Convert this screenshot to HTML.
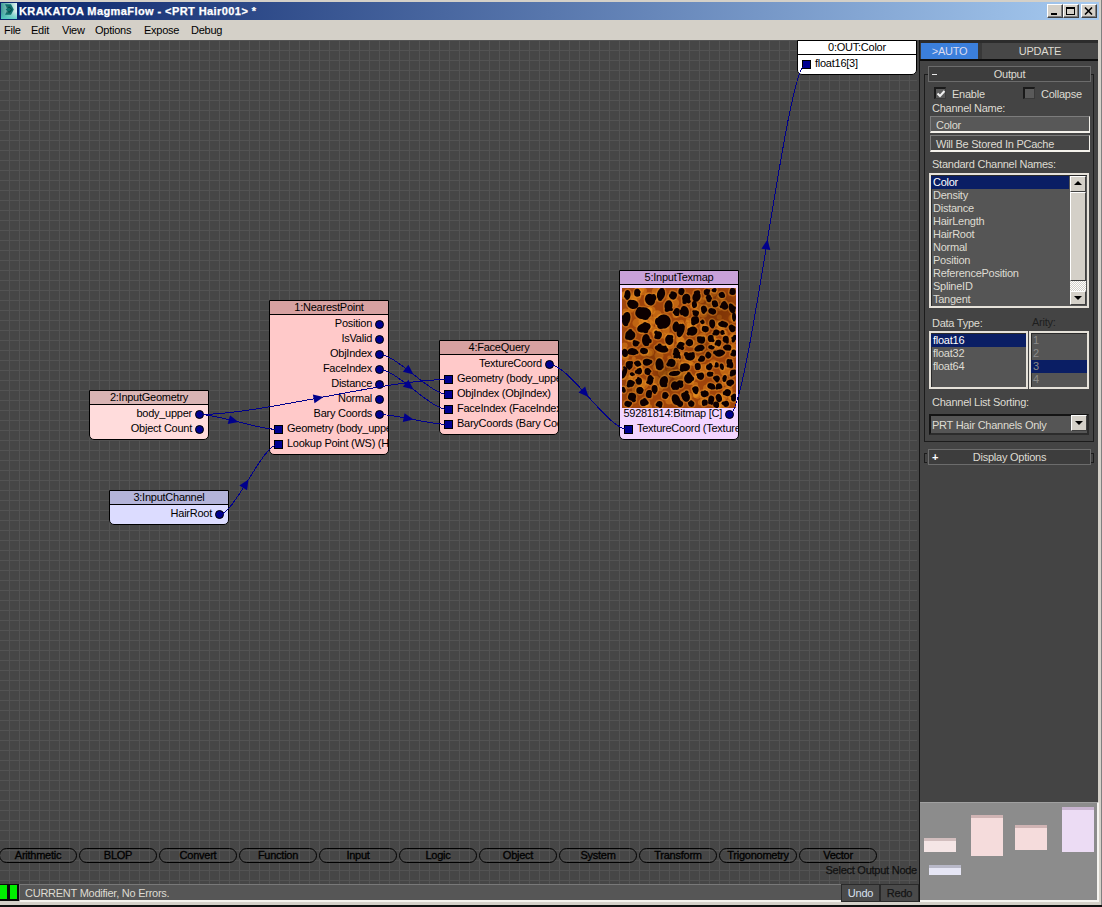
<!DOCTYPE html>
<html><head><meta charset="utf-8"><style>
*{margin:0;padding:0;box-sizing:border-box}
html,body{width:1102px;height:907px;overflow:hidden;background:#d4d0c8;font-family:"Liberation Sans", sans-serif;font-size:11px;letter-spacing:-0.25px}
.abs{position:absolute}
#title{position:absolute;left:0;top:2px;width:1099px;height:18px;background:linear-gradient(to right,#0a246a,#a6caf0)}
#title .t{position:absolute;left:19px;top:3px;color:#fff;font-weight:bold;font-size:11px;line-height:12px;white-space:nowrap;letter-spacing:0.42px;-webkit-text-stroke:0.25px #fff}
.wb{position:absolute;top:2px;width:16px;height:14px;background:#d4d0c8;border-top:1px solid #fff;border-left:1px solid #fff;border-right:1px solid #404040;border-bottom:1px solid #404040;box-shadow:inset -1px -1px 0 #808080}
#menu{position:absolute;left:0;top:20px;width:1099px;height:20px;background:#d4d0c8}
#menu span{position:absolute;top:4px;margin-left:-1px;color:#000;font-size:11px;line-height:12px}
#canvas{position:absolute;left:0;top:40px;width:919px;height:844px;background-color:#464646;
 background-image:linear-gradient(to right,#535353 1px,transparent 1px),linear-gradient(to bottom,#535353 1px,transparent 1px);
 background-size:10px 10px;background-position:9px 0px;overflow:hidden}
.node{position:absolute;border:1px solid #000;border-radius:0 0 5px 5px;overflow:hidden;color:#000}
.hdr{position:absolute;left:0;top:0;width:100%;height:14px;border-bottom:1px solid #000;text-align:center;line-height:13px;white-space:nowrap}
.row{position:absolute;height:15px;line-height:15px;white-space:nowrap}
.row.out{right:16px;text-align:right}
.row.in{left:17px}
.port{position:absolute;width:9px;height:9px;background:#000090;border:1px solid #000}
.port.c{border-radius:50%}
.img{position:absolute}
.wires{position:absolute;left:0;top:0}
.pill{position:absolute;top:808px;width:78px;height:15px;border:1px solid #000;border-radius:8px;text-align:center;line-height:13px;color:#000;-webkit-text-stroke:0.3px #000}
#selnode{position:absolute;right:2px;top:824px;color:#111;line-height:12px;-webkit-text-stroke:0.25px #111}
#panel{position:absolute;left:918px;top:40px;width:181px;height:762px;background:#444;border-left:1px solid #111}
.ptxt{position:absolute;color:#dedbd2;line-height:12px;white-space:nowrap}

#rpanel{position:absolute;left:919px;top:40px;width:179px;height:762px;background:#444;border-left:1px solid #151515}
.pt{position:absolute;color:#dedbd2;line-height:12px;white-space:nowrap;font-size:11px}
.bx{position:absolute}
.chk{position:absolute;width:12px;height:12px;background:#5a5a5a;border-top:2px solid #1a1a1a;border-left:2px solid #1a1a1a;border-right:1px solid #3a3a3a;border-bottom:1px solid #3a3a3a}
.lst{position:absolute;background:#555;border:2px solid #e6e2da;box-shadow:inset 1px 1px 0 #2a2a2a}
.lrow{position:absolute;left:0;height:13px;line-height:13px;padding-left:2px;color:#dedbd2;white-space:nowrap}
.sel{background:#0a1e64;color:#fff}
.sbtn{position:absolute;background:#d4d0c8;border-top:1px solid #fff;border-left:1px solid #fff;border-right:1px solid #404040;border-bottom:1px solid #404040}
.roll{position:absolute;border:1px solid #6c6c6c;background:#3d3d3d}
#status{position:absolute;left:19px;top:884px;width:822px;height:18px;background:#565656;border-top:1px solid #787878;border-left:1px solid #787878;border-bottom:2px solid #f4f2ec}
.gbox{position:absolute;top:884px;height:16px;background:#00f000;border:1px solid #000}
.ubtn{position:absolute;top:884px;height:18px;background:#4a4a4a;border:1px solid #2a2a2a;text-align:center;line-height:16px}
#mini{position:absolute;left:919px;top:802px;width:180px;height:100px;background:#8c8c8c;border-top:1px solid #a0a0a0;border-right:2px solid #f6f4f0;border-bottom:2px solid #f6f4f0}
.mn{position:absolute;border-top:3px solid}

</style></head><body>
<div id="title">
 <svg class="abs" style="left:1px;top:1px" width="16" height="16" viewBox="0 0 16 16"><defs><linearGradient id="ig" x1="0" y1="0" x2="1" y2="0"><stop offset="0" stop-color="#3f9e98"/><stop offset="1" stop-color="#dff4f0"/></linearGradient><linearGradient id="ig2" x1="0" y1="0" x2="0" y2="1"><stop offset="0.55" stop-color="#40c0b8" stop-opacity="0"/><stop offset="1" stop-color="#50d0c4" stop-opacity="0.85"/></linearGradient></defs><rect width="16" height="16" fill="url(#ig)"/><rect width="16" height="16" fill="url(#ig2)"/><path d="M4 1.3 L10 1.3 L12.8 6.6 L10 11.8 L4 11.8 L5.2 9.4 L7.6 9.4 L4.6 6.6 L7.6 3.8 L5.2 3.8 Z" fill="#0f706c"/><path d="M5.5 4.2 L8.8 4.2 L10.6 6.6 M5.5 9 L8.8 9 L10.6 6.6" fill="none" stroke="#063c3a" stroke-width="0.9"/></svg>
 <div class="t">KRAKATOA MagmaFlow - &lt;PRT Hair001&gt; *</div>
 <div class="wb" style="left:1047px"><div style="position:absolute;left:3px;top:8px;width:6px;height:2px;background:#000"></div></div>
 <div class="wb" style="left:1063px"><div style="position:absolute;left:2px;top:2px;width:9px;height:8px;border:1px solid #000;border-top-width:2px"></div></div>
 <div class="wb" style="left:1081px"><svg style="position:absolute;left:2px;top:2px" width="9" height="8" viewBox="0 0 9 8"><path d="M1 0.5 L8 7.5 M8 0.5 L1 7.5" stroke="#000" stroke-width="1.6"/></svg></div>
</div>
<div id="menu"><span style="left:5px">File</span><span style="left:32px">Edit</span><span style="left:63px">View</span><span style="left:96px">Options</span><span style="left:145px">Expose</span><span style="left:192px">Debug</span></div>
<div id="canvas">
 <div style="position:absolute;left:0;top:-40px;width:918px;height:884px">
 <div class="node" style="left:797px;top:40px;width:120px;height:35px;background:#ffffff"><div class="hdr" style="background:#ffffff">0:OUT:Color</div><div class="row in" style="top:15px">float16[3]</div><div class="port sq" style="left:4px;top:19px"></div></div><div class="node" style="left:269px;top:300px;width:120px;height:155px;background:#ffc9c9"><div class="hdr" style="background:#d7a1a1">1:NearestPoint</div><div class="row out" style="top:15px">Position</div><div class="port c" style="left:105px;top:19px"></div><div class="row out" style="top:30px">IsValid</div><div class="port c" style="left:105px;top:34px"></div><div class="row out" style="top:45px">ObjIndex</div><div class="port c" style="left:105px;top:49px"></div><div class="row out" style="top:60px">FaceIndex</div><div class="port c" style="left:105px;top:64px"></div><div class="row out" style="top:75px">Distance</div><div class="port c" style="left:105px;top:79px"></div><div class="row out" style="top:90px">Normal</div><div class="port c" style="left:105px;top:94px"></div><div class="row out" style="top:105px">Bary Coords</div><div class="port c" style="left:105px;top:109px"></div><div class="row in" style="top:120px">Geometry (body_upper)</div><div class="port sq" style="left:4px;top:124px"></div><div class="row in" style="top:135px">Lookup Point (WS) (HairRoot)</div><div class="port sq" style="left:4px;top:139px"></div></div><div class="node" style="left:89px;top:390px;width:120px;height:50px;background:#ffdcdc"><div class="hdr" style="background:#d9b4b4">2:InputGeometry</div><div class="row out" style="top:15px">body_upper</div><div class="port c" style="left:105px;top:19px"></div><div class="row out" style="top:30px">Object Count</div><div class="port c" style="left:105px;top:34px"></div></div><div class="node" style="left:109px;top:490px;width:120px;height:35px;background:#dcdcff"><div class="hdr" style="background:#b4b4d9">3:InputChannel</div><div class="row out" style="top:15px">HairRoot</div><div class="port c" style="left:105px;top:19px"></div></div><div class="node" style="left:439px;top:340px;width:120px;height:95px;background:#ffc9c9"><div class="hdr" style="background:#d7a1a1">4:FaceQuery</div><div class="row out" style="top:15px">TextureCoord</div><div class="port c" style="left:105px;top:19px"></div><div class="row in" style="top:30px">Geometry (body_upper)</div><div class="port sq" style="left:4px;top:34px"></div><div class="row in" style="top:45px">ObjIndex (ObjIndex)</div><div class="port sq" style="left:4px;top:49px"></div><div class="row in" style="top:60px">FaceIndex (FaceIndex)</div><div class="port sq" style="left:4px;top:64px"></div><div class="row in" style="top:75px">BaryCoords (Bary Coords)</div><div class="port sq" style="left:4px;top:79px"></div></div><div class="node" style="left:619px;top:270px;width:120px;height:170px;background:#f3d5ff"><div class="hdr" style="background:#c9a1d9">5:InputTexmap</div><div class="img" style="left:2px;top:17px"><svg width="114" height="120" viewBox="0 0 114 120" style="display:block"><defs><filter id="lb" x="-10%" y="-10%" width="120%" height="120%"><feGaussianBlur stdDeviation="0.5"/></filter><filter id="lb2" x="-50%" y="-50%" width="200%" height="200%"><feGaussianBlur stdDeviation="4"/></filter></defs><rect width="114" height="120" fill="#a0440a"/><circle cx="27.1" cy="65.3" r="3.1" fill="#f0961e" opacity="0.4"/><circle cx="68.8" cy="75.1" r="2.2" fill="#f0961e" opacity="0.4"/><circle cx="1.5" cy="100.5" r="2.8" fill="#f0961e" opacity="0.4"/><circle cx="26.7" cy="119.5" r="3.4" fill="#f0961e" opacity="0.4"/><circle cx="95.4" cy="57.2" r="3.9" fill="#f0961e" opacity="0.4"/><circle cx="17.2" cy="76.2" r="4.6" fill="#f0961e" opacity="0.4"/><circle cx="59.6" cy="89.0" r="4.0" fill="#f0961e" opacity="0.4"/><circle cx="7.3" cy="91.0" r="3.8" fill="#f0961e" opacity="0.4"/><circle cx="34.3" cy="3.7" r="4.6" fill="#f0961e" opacity="0.4"/><circle cx="53.9" cy="86.3" r="4.6" fill="#f0961e" opacity="0.4"/><circle cx="81.4" cy="110.5" r="3.2" fill="#f0961e" opacity="0.4"/><circle cx="91.3" cy="53.4" r="4.8" fill="#f0961e" opacity="0.4"/><circle cx="100.2" cy="11.7" r="2.4" fill="#f0961e" opacity="0.4"/><circle cx="24.7" cy="115.9" r="3.3" fill="#f0961e" opacity="0.4"/><circle cx="71.4" cy="36.1" r="3.5" fill="#f0961e" opacity="0.4"/><circle cx="44.0" cy="42.1" r="3.8" fill="#f0961e" opacity="0.4"/><circle cx="66.6" cy="108.5" r="4.0" fill="#f0961e" opacity="0.4"/><circle cx="105.9" cy="102.8" r="5.0" fill="#f0961e" opacity="0.4"/><circle cx="76.5" cy="19.6" r="4.6" fill="#f0961e" opacity="0.4"/><circle cx="110.0" cy="108.6" r="3.7" fill="#f0961e" opacity="0.4"/><circle cx="81.4" cy="25.3" r="4.5" fill="#f0961e" opacity="0.4"/><circle cx="65.4" cy="34.2" r="2.2" fill="#f0961e" opacity="0.4"/><circle cx="97.3" cy="118.8" r="2.3" fill="#f0961e" opacity="0.4"/><circle cx="91.3" cy="49.3" r="2.5" fill="#f0961e" opacity="0.4"/><circle cx="33.5" cy="92.3" r="4.6" fill="#f0961e" opacity="0.4"/><circle cx="5.0" cy="73.7" r="2.1" fill="#f0961e" opacity="0.4"/><circle cx="81.9" cy="39.7" r="4.6" fill="#f0961e" opacity="0.4"/><circle cx="111.8" cy="60.7" r="5.0" fill="#f0961e" opacity="0.4"/><circle cx="35.3" cy="9.2" r="3.8" fill="#f0961e" opacity="0.4"/><circle cx="3.6" cy="23.7" r="3.2" fill="#f0961e" opacity="0.4"/><circle cx="69.6" cy="18.7" r="2.1" fill="#f0961e" opacity="0.4"/><circle cx="98.9" cy="37.7" r="4.9" fill="#f0961e" opacity="0.4"/><circle cx="102.2" cy="45.3" r="3.4" fill="#f0961e" opacity="0.4"/><circle cx="59.3" cy="77.3" r="3.8" fill="#f0961e" opacity="0.4"/><circle cx="63.8" cy="74.4" r="4.8" fill="#f0961e" opacity="0.4"/><circle cx="57.8" cy="51.7" r="4.2" fill="#f0961e" opacity="0.4"/><circle cx="27.1" cy="36.1" r="4.9" fill="#f0961e" opacity="0.4"/><circle cx="59.4" cy="65.8" r="2.0" fill="#f0961e" opacity="0.4"/><circle cx="47.3" cy="69.6" r="2.1" fill="#f0961e" opacity="0.4"/><circle cx="70.2" cy="75.9" r="2.2" fill="#f0961e" opacity="0.4"/><circle cx="71.5" cy="56.0" r="4.0" fill="#f0961e" opacity="0.4"/><circle cx="40.2" cy="84.8" r="4.2" fill="#f0961e" opacity="0.4"/><circle cx="2.5" cy="7.3" r="4.0" fill="#f0961e" opacity="0.4"/><circle cx="109.8" cy="30.1" r="3.4" fill="#f0961e" opacity="0.4"/><circle cx="67.6" cy="38.4" r="3.1" fill="#f0961e" opacity="0.4"/><circle cx="35.6" cy="44.3" r="3.8" fill="#f0961e" opacity="0.4"/><circle cx="34.2" cy="45.3" r="4.3" fill="#f0961e" opacity="0.4"/><circle cx="3.1" cy="68.3" r="4.2" fill="#f0961e" opacity="0.4"/><circle cx="35.3" cy="26.7" r="4.4" fill="#f0961e" opacity="0.4"/><circle cx="27.2" cy="22.5" r="3.3" fill="#f0961e" opacity="0.4"/><circle cx="79.6" cy="12.2" r="3.0" fill="#f0961e" opacity="0.4"/><circle cx="38.0" cy="100.0" r="3.3" fill="#f0961e" opacity="0.4"/><circle cx="97.5" cy="20.3" r="3.0" fill="#f0961e" opacity="0.4"/><circle cx="74.1" cy="106.2" r="3.4" fill="#f0961e" opacity="0.4"/><circle cx="25.7" cy="14.5" r="3.6" fill="#f0961e" opacity="0.4"/><circle cx="21.8" cy="96.8" r="4.5" fill="#f0961e" opacity="0.4"/><circle cx="20.9" cy="33.4" r="4.4" fill="#f0961e" opacity="0.4"/><circle cx="73.2" cy="96.8" r="3.0" fill="#f0961e" opacity="0.4"/><circle cx="14.8" cy="35.0" r="4.4" fill="#f0961e" opacity="0.4"/><circle cx="30.9" cy="41.6" r="3.3" fill="#f0961e" opacity="0.4"/><circle cx="47.9" cy="49.1" r="4.8" fill="#f0961e" opacity="0.4"/><circle cx="17.8" cy="0.6" r="4.8" fill="#f0961e" opacity="0.4"/><circle cx="100.3" cy="118.4" r="3.3" fill="#f0961e" opacity="0.4"/><circle cx="108.3" cy="111.3" r="2.7" fill="#f0961e" opacity="0.4"/><circle cx="85.0" cy="100.4" r="4.0" fill="#f0961e" opacity="0.4"/><circle cx="59.2" cy="34.7" r="3.0" fill="#f0961e" opacity="0.4"/><circle cx="25.9" cy="8.2" r="3.8" fill="#f0961e" opacity="0.4"/><circle cx="32.7" cy="97.2" r="2.1" fill="#f0961e" opacity="0.4"/><circle cx="103.0" cy="83.2" r="4.8" fill="#f0961e" opacity="0.4"/><circle cx="102.2" cy="108.0" r="3.7" fill="#f0961e" opacity="0.4"/><circle cx="1.5" cy="89.4" r="2.5" fill="#f0961e" opacity="0.4"/><circle cx="34.2" cy="79.5" r="3.6" fill="#f0961e" opacity="0.4"/><circle cx="47.2" cy="112.7" r="3.8" fill="#f0961e" opacity="0.4"/><circle cx="38.9" cy="30.3" r="4.6" fill="#f0961e" opacity="0.4"/><circle cx="54.4" cy="93.9" r="3.1" fill="#f0961e" opacity="0.4"/><circle cx="22.5" cy="64.2" r="4.5" fill="#f0961e" opacity="0.4"/><circle cx="19.5" cy="95.0" r="4.8" fill="#f0961e" opacity="0.4"/><circle cx="91.9" cy="98.8" r="2.0" fill="#f0961e" opacity="0.4"/><circle cx="71.7" cy="103.5" r="2.1" fill="#f0961e" opacity="0.4"/><circle cx="30.9" cy="32.2" r="3.6" fill="#f0961e" opacity="0.4"/><circle cx="48.2" cy="56.7" r="4.3" fill="#f0961e" opacity="0.4"/><circle cx="0.2" cy="6.6" r="2.4" fill="#f0961e" opacity="0.4"/><circle cx="14.2" cy="8.2" r="4.9" fill="#f0961e" opacity="0.4"/><circle cx="97.4" cy="10.3" r="3.5" fill="#f0961e" opacity="0.4"/><circle cx="36.0" cy="37.7" r="3.1" fill="#f0961e" opacity="0.4"/><circle cx="73.7" cy="70.4" r="3.1" fill="#f0961e" opacity="0.4"/><circle cx="21.8" cy="39.5" r="2.4" fill="#f0961e" opacity="0.4"/><circle cx="63.3" cy="85.9" r="3.1" fill="#f0961e" opacity="0.4"/><circle cx="9.1" cy="21.4" r="3.1" fill="#f0961e" opacity="0.4"/><circle cx="68.9" cy="93.9" r="3.1" fill="#f0961e" opacity="0.4"/><circle cx="91.3" cy="74.8" r="3.3" fill="#f0961e" opacity="0.4"/><circle cx="42.5" cy="59.5" r="4.1" fill="#f0961e" opacity="0.4"/><circle cx="47.9" cy="83.3" r="3.4" fill="#f0961e" opacity="0.4"/><circle cx="27.9" cy="64.3" r="4.1" fill="#f0961e" opacity="0.4"/><circle cx="8.2" cy="51.0" r="3.3" fill="#f0961e" opacity="0.4"/><circle cx="100.3" cy="112.4" r="3.1" fill="#f0961e" opacity="0.4"/><circle cx="102.4" cy="94.9" r="2.8" fill="#f0961e" opacity="0.4"/><circle cx="52.9" cy="14.8" r="4.4" fill="#f0961e" opacity="0.4"/><circle cx="75.5" cy="106.5" r="4.4" fill="#f0961e" opacity="0.4"/><circle cx="76.1" cy="88.0" r="3.7" fill="#f0961e" opacity="0.4"/><circle cx="11.8" cy="70.5" r="2.0" fill="#f0961e" opacity="0.4"/><circle cx="16.4" cy="92.9" r="2.1" fill="#f0961e" opacity="0.4"/><circle cx="10.5" cy="11.9" r="4.6" fill="#f0961e" opacity="0.4"/><circle cx="20.4" cy="2.8" r="4.5" fill="#f0961e" opacity="0.4"/><circle cx="13.8" cy="101.3" r="4.0" fill="#f0961e" opacity="0.4"/><circle cx="95.3" cy="114.3" r="3.7" fill="#f0961e" opacity="0.4"/><circle cx="91.1" cy="4.4" r="4.3" fill="#f0961e" opacity="0.4"/><circle cx="58.3" cy="85.8" r="2.3" fill="#f0961e" opacity="0.4"/><circle cx="85.4" cy="112.1" r="2.2" fill="#f0961e" opacity="0.4"/><circle cx="37.0" cy="67.7" r="4.5" fill="#f0961e" opacity="0.4"/><circle cx="27.6" cy="21.6" r="2.7" fill="#f0961e" opacity="0.4"/><circle cx="70.2" cy="90.4" r="3.2" fill="#f0961e" opacity="0.4"/><circle cx="41.9" cy="47.6" r="3.1" fill="#f0961e" opacity="0.4"/><circle cx="47.7" cy="10.0" r="3.5" fill="#f0961e" opacity="0.4"/><circle cx="110.9" cy="49.5" r="4.2" fill="#f0961e" opacity="0.4"/><circle cx="18.3" cy="82.9" r="4.3" fill="#f0961e" opacity="0.4"/><circle cx="76.8" cy="62.1" r="3.5" fill="#f0961e" opacity="0.4"/><circle cx="73.3" cy="107.7" r="2.4" fill="#f0961e" opacity="0.4"/><circle cx="10.9" cy="89.8" r="4.7" fill="#f0961e" opacity="0.4"/><circle cx="59.0" cy="53.2" r="4.2" fill="#f0961e" opacity="0.4"/><circle cx="21.2" cy="32.1" r="2.6" fill="#f0961e" opacity="0.4"/><circle cx="66.8" cy="37.8" r="2.7" fill="#f0961e" opacity="0.4"/><circle cx="78.8" cy="114.4" r="2.9" fill="#f0961e" opacity="0.4"/><circle cx="80.4" cy="49.6" r="4.6" fill="#f0961e" opacity="0.4"/><circle cx="66.6" cy="32.1" r="2.7" fill="#f0961e" opacity="0.4"/><circle cx="2.6" cy="57.5" r="3.1" fill="#f0961e" opacity="0.4"/><circle cx="19.6" cy="43.3" r="3.0" fill="#f0961e" opacity="0.4"/><circle cx="88.3" cy="17.2" r="5.0" fill="#f0961e" opacity="0.4"/><circle cx="54.7" cy="71.9" r="3.4" fill="#f0961e" opacity="0.4"/><circle cx="95.1" cy="98.6" r="3.7" fill="#f0961e" opacity="0.4"/><circle cx="54.9" cy="86.5" r="4.6" fill="#f0961e" opacity="0.4"/><circle cx="45.6" cy="88.0" r="4.9" fill="#f0961e" opacity="0.4"/><circle cx="53.3" cy="27.6" r="2.7" fill="#f0961e" opacity="0.4"/><circle cx="81.8" cy="81.0" r="4.9" fill="#f0961e" opacity="0.4"/><circle cx="97.3" cy="29.1" r="2.6" fill="#f0961e" opacity="0.4"/><circle cx="29.5" cy="22.5" r="4.1" fill="#f0961e" opacity="0.4"/><circle cx="97.9" cy="108.0" r="2.8" fill="#f0961e" opacity="0.4"/><circle cx="98.6" cy="37.6" r="3.3" fill="#f0961e" opacity="0.4"/><circle cx="83.1" cy="10.3" r="2.3" fill="#f0961e" opacity="0.4"/><circle cx="95.1" cy="35.0" r="3.1" fill="#f0961e" opacity="0.4"/><circle cx="95" cy="20" r="18" fill="#4a1e04" opacity="0.35" filter="url(#lb2)"/><circle cx="48" cy="88" r="14" fill="#4a1e04" opacity="0.45" filter="url(#lb2)"/><circle cx="30" cy="70" r="10" fill="#4a1e04" opacity="0.25" filter="url(#lb2)"/><circle cx="80" cy="60" r="10" fill="#4a1e04" opacity="0.2" filter="url(#lb2)"/><circle cx="10" cy="100" r="10" fill="#4a1e04" opacity="0.2" filter="url(#lb2)"/><g fill="#f2a032" stroke="#f2a032" stroke-width="3" opacity="0.35" filter="url(#lb)"><ellipse cx="5.5" cy="6.9" rx="3.0" ry="5.0" transform="rotate(4 5.5 6.9)"/><circle cx="4.7" cy="4.2" r="1.4"/><circle cx="3.4" cy="8.4" r="1.3"/><ellipse cx="15.1" cy="4.8" rx="3.0" ry="4.0" transform="rotate(4 15.1 4.8)"/><circle cx="17.2" cy="4.0" r="1.5"/><circle cx="16.6" cy="6.7" r="1.6"/><ellipse cx="28.1" cy="11.7" rx="5.0" ry="6.0" transform="rotate(-19 28.1 11.7)"/><circle cx="31.6" cy="8.1" r="2.1"/><circle cx="31.5" cy="10.1" r="2.8"/><ellipse cx="39.0" cy="6.2" rx="4.0" ry="6.0" transform="rotate(13 39.0 6.2)"/><circle cx="38.1" cy="11.0" r="2.1"/><circle cx="40.0" cy="2.3" r="2.2"/><ellipse cx="51.3" cy="7.6" rx="3.5" ry="4.0" transform="rotate(23 51.3 7.6)"/><circle cx="50.0" cy="4.8" r="1.5"/><circle cx="48.8" cy="7.7" r="1.9"/><ellipse cx="11.0" cy="16.5" rx="5.5" ry="4.5" transform="rotate(9 11.0 16.5)"/><circle cx="7.7" cy="15.3" r="2.4"/><circle cx="8.5" cy="14.3" r="2.6"/><ellipse cx="46.5" cy="17.8" rx="4.0" ry="5.5" transform="rotate(8 46.5 17.8)"/><circle cx="49.2" cy="21.4" r="1.7"/><circle cx="44.8" cy="21.9" r="2.1"/><ellipse cx="21.2" cy="25.3" rx="8.0" ry="6.0" transform="rotate(3 21.2 25.3)"/><circle cx="17.5" cy="21.7" r="2.8"/><circle cx="23.4" cy="28.7" r="3.3"/><ellipse cx="4.2" cy="30.8" rx="4.0" ry="7.0" transform="rotate(13 4.2 30.8)"/><circle cx="0.9" cy="29.2" r="1.9"/><circle cx="3.9" cy="35.9" r="2.3"/><ellipse cx="41.7" cy="33.5" rx="7.0" ry="7.0" transform="rotate(-23 41.7 33.5)"/><circle cx="36.9" cy="33.4" r="3.9"/><circle cx="38.6" cy="37.5" r="3.4"/><ellipse cx="54.0" cy="39.0" rx="3.5" ry="5.0" transform="rotate(2 54.0 39.0)"/><circle cx="54.3" cy="35.4" r="2.0"/><circle cx="55.9" cy="41.2" r="1.5"/><ellipse cx="21.9" cy="39.7" rx="7.0" ry="4.5" transform="rotate(-19 21.9 39.7)"/><circle cx="23.0" cy="35.9" r="2.0"/><circle cx="23.8" cy="42.8" r="2.5"/><ellipse cx="8.3" cy="47.2" rx="5.0" ry="5.0" transform="rotate(16 8.3 47.2)"/><circle cx="8.3" cy="43.2" r="2.1"/><circle cx="5.6" cy="49.2" r="2.5"/><ellipse cx="24.0" cy="52.0" rx="4.0" ry="6.0" transform="rotate(3 24.0 52.0)"/><circle cx="24.8" cy="55.9" r="2.2"/><circle cx="27.5" cy="53.0" r="2.3"/><ellipse cx="36.3" cy="47.2" rx="3.5" ry="4.0" transform="rotate(22 36.3 47.2)"/><circle cx="34.2" cy="49.3" r="1.8"/><circle cx="34.1" cy="44.4" r="1.9"/><ellipse cx="47.2" cy="52.0" rx="4.0" ry="5.0" transform="rotate(-10 47.2 52.0)"/><circle cx="49.2" cy="49.0" r="2.1"/><circle cx="46.9" cy="49.0" r="2.2"/><ellipse cx="54.7" cy="24.0" rx="3.0" ry="4.0" transform="rotate(8 54.7 24.0)"/><circle cx="52.4" cy="24.2" r="1.5"/><circle cx="55.5" cy="26.9" r="1.2"/><ellipse cx="13.7" cy="55.4" rx="3.0" ry="3.0" transform="rotate(0 13.7 55.4)"/><circle cx="12.3" cy="53.6" r="1.5"/><circle cx="16.3" cy="54.7" r="1.3"/><ellipse cx="59.4" cy="3.5" rx="3.0" ry="3.5" transform="rotate(15 59.4 3.5)"/><circle cx="58.1" cy="2.0" r="1.4"/><circle cx="59.6" cy="5.7" r="1.5"/><ellipse cx="64.2" cy="10.3" rx="4.0" ry="4.5" transform="rotate(21 64.2 10.3)"/><circle cx="62.6" cy="13.9" r="2.2"/><circle cx="66.6" cy="13.3" r="2.1"/><ellipse cx="74.5" cy="8.9" rx="4.0" ry="5.0" transform="rotate(21 74.5 8.9)"/><circle cx="73.8" cy="4.7" r="1.9"/><circle cx="75.8" cy="4.6" r="2.3"/><ellipse cx="72.4" cy="16.5" rx="2.5" ry="3.5" transform="rotate(-3 72.4 16.5)"/><circle cx="72.5" cy="13.8" r="1.1"/><circle cx="73.9" cy="17.1" r="1.1"/><ellipse cx="62.8" cy="23.3" rx="4.0" ry="5.5" transform="rotate(-17 62.8 23.3)"/><circle cx="59.4" cy="23.4" r="2.0"/><circle cx="59.9" cy="25.4" r="1.8"/><ellipse cx="84.7" cy="4.2" rx="3.0" ry="3.0" transform="rotate(-2 84.7 4.2)"/><circle cx="84.8" cy="2.0" r="1.3"/><circle cx="86.8" cy="2.7" r="1.4"/><ellipse cx="86.8" cy="10.3" rx="2.5" ry="4.0" transform="rotate(-6 86.8 10.3)"/><circle cx="84.8" cy="9.7" r="1.1"/><circle cx="88.5" cy="10.3" r="1.4"/><ellipse cx="92.2" cy="2.1" rx="2.5" ry="2.0" transform="rotate(-18 92.2 2.1)"/><circle cx="90.6" cy="2.4" r="0.9"/><circle cx="93.1" cy="3.4" r="0.9"/><ellipse cx="99.7" cy="6.9" rx="3.0" ry="3.0" transform="rotate(-24 99.7 6.9)"/><circle cx="101.2" cy="8.2" r="1.5"/><circle cx="101.4" cy="7.6" r="1.5"/><ellipse cx="110.7" cy="3.5" rx="3.0" ry="3.5" transform="rotate(-5 110.7 3.5)"/><circle cx="110.2" cy="1.4" r="1.4"/><circle cx="109.2" cy="4.8" r="1.8"/><ellipse cx="92.9" cy="15.8" rx="3.0" ry="3.5" transform="rotate(-14 92.9 15.8)"/><circle cx="94.8" cy="17.3" r="1.3"/><circle cx="91.3" cy="14.0" r="1.3"/><ellipse cx="102.5" cy="17.8" rx="3.5" ry="4.0" transform="rotate(-22 102.5 17.8)"/><circle cx="102.2" cy="15.0" r="2.0"/><circle cx="99.3" cy="18.6" r="1.6"/><ellipse cx="82.0" cy="21.2" rx="3.0" ry="3.5" transform="rotate(-13 82.0 21.2)"/><circle cx="81.7" cy="24.3" r="1.6"/><circle cx="80.9" cy="23.0" r="1.6"/><ellipse cx="90.2" cy="23.3" rx="4.0" ry="3.0" transform="rotate(23 90.2 23.3)"/><circle cx="88.2" cy="22.3" r="1.2"/><circle cx="92.4" cy="24.4" r="1.2"/><ellipse cx="110.0" cy="20.6" rx="3.0" ry="5.0" transform="rotate(-22 110.0 20.6)"/><circle cx="108.4" cy="16.8" r="1.3"/><circle cx="112.3" cy="20.0" r="1.7"/><ellipse cx="73.8" cy="25.3" rx="3.0" ry="3.0" transform="rotate(21 73.8 25.3)"/><circle cx="75.5" cy="24.6" r="1.4"/><circle cx="71.6" cy="23.6" r="1.3"/><ellipse cx="73.1" cy="32.2" rx="4.0" ry="4.0" transform="rotate(-10 73.1 32.2)"/><circle cx="74.6" cy="30.1" r="1.9"/><circle cx="71.4" cy="35.1" r="2.3"/><ellipse cx="80.6" cy="34.2" rx="2.0" ry="2.0" transform="rotate(-16 80.6 34.2)"/><circle cx="80.5" cy="32.5" r="1.1"/><circle cx="78.9" cy="33.6" r="0.9"/><ellipse cx="90.2" cy="35.6" rx="3.0" ry="4.0" transform="rotate(-4 90.2 35.6)"/><circle cx="90.5" cy="39.1" r="1.5"/><circle cx="90.0" cy="38.2" r="1.6"/><ellipse cx="101.1" cy="36.3" rx="5.0" ry="3.0" transform="rotate(5 101.1 36.3)"/><circle cx="100.2" cy="34.2" r="1.5"/><circle cx="103.5" cy="38.4" r="1.2"/><ellipse cx="112.0" cy="28.8" rx="2.0" ry="4.0" transform="rotate(-2 112.0 28.8)"/><circle cx="112.1" cy="25.5" r="0.8"/><circle cx="112.1" cy="32.4" r="1.1"/><ellipse cx="58.7" cy="42.4" rx="3.5" ry="7.0" transform="rotate(19 58.7 42.4)"/><circle cx="60.5" cy="38.6" r="2.0"/><circle cx="58.4" cy="37.4" r="1.7"/><ellipse cx="70.4" cy="43.1" rx="5.0" ry="4.5" transform="rotate(-21 70.4 43.1)"/><circle cx="66.6" cy="45.6" r="1.9"/><circle cx="67.5" cy="41.9" r="1.9"/><ellipse cx="83.3" cy="41.1" rx="3.5" ry="3.0" transform="rotate(7 83.3 41.1)"/><circle cx="83.4" cy="42.9" r="1.3"/><circle cx="81.6" cy="39.2" r="1.2"/><ellipse cx="94.3" cy="44.5" rx="3.0" ry="3.0" transform="rotate(-14 94.3 44.5)"/><circle cx="96.3" cy="44.1" r="1.5"/><circle cx="92.0" cy="45.8" r="1.6"/><ellipse cx="100.4" cy="44.5" rx="2.0" ry="2.5" transform="rotate(14 100.4 44.5)"/><circle cx="99.1" cy="44.1" r="0.9"/><circle cx="102.0" cy="45.6" r="0.8"/><ellipse cx="110.0" cy="40.4" rx="3.0" ry="4.0" transform="rotate(-24 110.0 40.4)"/><circle cx="112.0" cy="39.8" r="1.7"/><circle cx="112.0" cy="42.0" r="1.3"/><ellipse cx="79.2" cy="52.0" rx="4.0" ry="3.5" transform="rotate(16 79.2 52.0)"/><circle cx="76.7" cy="50.1" r="1.9"/><circle cx="81.2" cy="50.2" r="1.8"/><ellipse cx="88.8" cy="50.6" rx="3.0" ry="3.5" transform="rotate(-3 88.8 50.6)"/><circle cx="90.9" cy="52.6" r="1.6"/><circle cx="89.6" cy="48.4" r="1.5"/><ellipse cx="67.6" cy="54.7" rx="3.5" ry="3.5" transform="rotate(-2 67.6 54.7)"/><circle cx="67.3" cy="52.5" r="1.6"/><circle cx="65.4" cy="54.9" r="1.8"/><ellipse cx="96.3" cy="54.7" rx="3.0" ry="3.0" transform="rotate(12 96.3 54.7)"/><circle cx="94.1" cy="55.9" r="1.6"/><circle cx="96.8" cy="56.8" r="1.8"/><ellipse cx="103.8" cy="51.3" rx="3.0" ry="3.5" transform="rotate(-8 103.8 51.3)"/><circle cx="102.1" cy="52.2" r="1.3"/><circle cx="105.2" cy="54.1" r="1.6"/><ellipse cx="112.0" cy="50.6" rx="2.0" ry="4.0" transform="rotate(19 112.0 50.6)"/><circle cx="113.6" cy="50.3" r="1.2"/><circle cx="110.5" cy="49.9" r="1.2"/><ellipse cx="58.7" cy="56.8" rx="3.0" ry="3.0" transform="rotate(20 58.7 56.8)"/><circle cx="60.9" cy="56.1" r="1.7"/><circle cx="56.3" cy="58.4" r="1.8"/><ellipse cx="2.9" cy="65.1" rx="3.0" ry="4.0" transform="rotate(-10 2.9 65.1)"/><circle cx="4.7" cy="64.0" r="1.3"/><circle cx="2.5" cy="62.3" r="1.5"/><ellipse cx="10.7" cy="63.6" rx="5.0" ry="3.5" transform="rotate(7 10.7 63.6)"/><circle cx="14.9" cy="64.4" r="1.6"/><circle cx="7.4" cy="64.6" r="1.9"/><ellipse cx="22.0" cy="62.9" rx="4.0" ry="3.0" transform="rotate(12 22.0 62.9)"/><circle cx="21.4" cy="64.8" r="1.4"/><circle cx="19.9" cy="63.9" r="1.3"/><ellipse cx="39.6" cy="60.8" rx="7.0" ry="3.5" transform="rotate(13 39.6 60.8)"/><circle cx="37.6" cy="57.7" r="2.1"/><circle cx="43.2" cy="59.0" r="1.5"/><ellipse cx="54.5" cy="65.1" rx="3.0" ry="5.5" transform="rotate(-9 54.5 65.1)"/><circle cx="52.2" cy="66.1" r="1.5"/><circle cx="52.8" cy="68.9" r="1.4"/><ellipse cx="7.2" cy="77.0" rx="3.5" ry="4.0" transform="rotate(-2 7.2 77.0)"/><circle cx="9.5" cy="74.7" r="1.6"/><circle cx="7.3" cy="80.5" r="1.4"/><ellipse cx="15.6" cy="75.6" rx="3.0" ry="3.0" transform="rotate(-18 15.6 75.6)"/><circle cx="13.3" cy="75.1" r="1.3"/><circle cx="17.5" cy="76.2" r="1.7"/><ellipse cx="24.8" cy="74.2" rx="4.0" ry="3.5" transform="rotate(-2 24.8 74.2)"/><circle cx="28.3" cy="73.8" r="2.1"/><circle cx="27.4" cy="74.7" r="1.4"/><ellipse cx="37.5" cy="76.3" rx="4.0" ry="6.0" transform="rotate(-3 37.5 76.3)"/><circle cx="36.2" cy="79.5" r="2.0"/><circle cx="39.9" cy="78.7" r="1.8"/><ellipse cx="49.5" cy="74.9" rx="4.0" ry="4.0" transform="rotate(15 49.5 74.9)"/><circle cx="47.1" cy="76.3" r="1.6"/><circle cx="46.5" cy="76.3" r="2.1"/><ellipse cx="2.2" cy="84.8" rx="2.5" ry="6.0" transform="rotate(21 2.2 84.8)"/><circle cx="2.8" cy="81.0" r="1.1"/><circle cx="2.3" cy="79.5" r="1.3"/><ellipse cx="10.0" cy="86.2" rx="2.0" ry="2.0" transform="rotate(17 10.0 86.2)"/><circle cx="8.7" cy="85.8" r="0.9"/><circle cx="11.6" cy="86.4" r="1.2"/><ellipse cx="17.0" cy="83.4" rx="3.0" ry="3.0" transform="rotate(20 17.0 83.4)"/><circle cx="14.6" cy="83.9" r="1.8"/><circle cx="18.0" cy="81.2" r="1.4"/><ellipse cx="25.5" cy="83.4" rx="3.0" ry="3.5" transform="rotate(1 25.5 83.4)"/><circle cx="26.5" cy="85.4" r="1.6"/><circle cx="27.9" cy="83.3" r="1.4"/><ellipse cx="52.3" cy="85.5" rx="5.0" ry="2.5" transform="rotate(-7 52.3 85.5)"/><circle cx="48.1" cy="86.1" r="1.2"/><circle cx="55.5" cy="85.1" r="1.2"/><ellipse cx="28.3" cy="91.9" rx="3.0" ry="5.0" transform="rotate(1 28.3 91.9)"/><circle cx="26.0" cy="94.3" r="1.7"/><circle cx="30.5" cy="90.2" r="1.2"/><ellipse cx="17.0" cy="93.3" rx="3.0" ry="3.5" transform="rotate(4 17.0 93.3)"/><circle cx="14.8" cy="92.5" r="1.4"/><circle cx="16.3" cy="90.2" r="1.3"/><ellipse cx="8.6" cy="95.4" rx="3.5" ry="3.5" transform="rotate(8 8.6 95.4)"/><circle cx="6.7" cy="97.4" r="2.0"/><circle cx="11.4" cy="94.7" r="1.5"/><ellipse cx="41.8" cy="93.3" rx="4.0" ry="5.5" transform="rotate(21 41.8 93.3)"/><circle cx="43.0" cy="97.0" r="2.3"/><circle cx="40.7" cy="96.8" r="2.4"/><ellipse cx="53.0" cy="97.5" rx="4.0" ry="4.0" transform="rotate(22 53.0 97.5)"/><circle cx="51.8" cy="100.2" r="1.8"/><circle cx="54.9" cy="99.5" r="2.4"/><ellipse cx="1.5" cy="101.8" rx="2.0" ry="3.0" transform="rotate(-21 1.5 101.8)"/><circle cx="1.7" cy="103.8" r="0.8"/><circle cx="-0.2" cy="101.4" r="1.1"/><ellipse cx="17.8" cy="102.5" rx="3.5" ry="3.5" transform="rotate(7 17.8 102.5)"/><circle cx="18.7" cy="100.6" r="1.6"/><circle cx="19.9" cy="102.0" r="1.6"/><ellipse cx="32.6" cy="101.0" rx="3.0" ry="4.0" transform="rotate(-1 32.6 101.0)"/><circle cx="32.3" cy="104.1" r="1.2"/><circle cx="32.8" cy="104.7" r="1.3"/><ellipse cx="10.0" cy="108.8" rx="4.0" ry="4.0" transform="rotate(20 10.0 108.8)"/><circle cx="11.7" cy="112.2" r="2.1"/><circle cx="8.4" cy="106.7" r="1.6"/><ellipse cx="26.9" cy="106.0" rx="3.0" ry="4.0" transform="rotate(13 26.9 106.0)"/><circle cx="27.8" cy="108.4" r="1.7"/><circle cx="28.2" cy="104.3" r="1.8"/><ellipse cx="43.2" cy="107.4" rx="3.0" ry="3.5" transform="rotate(2 43.2 107.4)"/><circle cx="41.8" cy="108.9" r="1.4"/><circle cx="45.3" cy="107.2" r="1.3"/><ellipse cx="53.8" cy="111.6" rx="4.0" ry="5.5" transform="rotate(-18 53.8 111.6)"/><circle cx="55.8" cy="114.4" r="2.3"/><circle cx="56.2" cy="113.3" r="2.4"/><ellipse cx="5.8" cy="115.9" rx="3.5" ry="3.0" transform="rotate(25 5.8 115.9)"/><circle cx="8.2" cy="115.6" r="1.4"/><circle cx="8.4" cy="115.2" r="1.6"/><ellipse cx="22.0" cy="114.5" rx="4.0" ry="3.5" transform="rotate(-9 22.0 114.5)"/><circle cx="24.9" cy="114.8" r="1.9"/><circle cx="22.6" cy="111.8" r="1.7"/><ellipse cx="37.5" cy="115.9" rx="3.0" ry="3.0" transform="rotate(2 37.5 115.9)"/><circle cx="35.3" cy="116.7" r="1.7"/><circle cx="38.2" cy="118.2" r="1.8"/><ellipse cx="58.8" cy="59.4" rx="3.5" ry="2.0" transform="rotate(17 58.8 59.4)"/><circle cx="60.2" cy="61.1" r="1.1"/><circle cx="60.0" cy="60.6" r="0.9"/><ellipse cx="77.2" cy="60.1" rx="5.0" ry="3.0" transform="rotate(-22 77.2 60.1)"/><circle cx="80.9" cy="59.8" r="1.7"/><circle cx="79.5" cy="61.3" r="1.7"/><ellipse cx="89.2" cy="59.4" rx="3.0" ry="2.0" transform="rotate(15 89.2 59.4)"/><circle cx="91.7" cy="59.3" r="1.0"/><circle cx="89.4" cy="58.1" r="1.0"/><ellipse cx="105.4" cy="59.4" rx="4.0" ry="3.0" transform="rotate(-3 105.4 59.4)"/><circle cx="107.4" cy="61.3" r="1.4"/><circle cx="102.5" cy="59.3" r="1.4"/><ellipse cx="68.0" cy="68.6" rx="5.0" ry="4.0" transform="rotate(-7 68.0 68.6)"/><circle cx="64.2" cy="66.4" r="2.3"/><circle cx="70.9" cy="65.9" r="1.8"/><ellipse cx="86.3" cy="67.2" rx="3.0" ry="3.0" transform="rotate(24 86.3 67.2)"/><circle cx="86.1" cy="69.1" r="1.5"/><circle cx="86.1" cy="65.1" r="1.6"/><ellipse cx="97.6" cy="65.1" rx="5.0" ry="3.5" transform="rotate(-11 97.6 65.1)"/><circle cx="101.3" cy="64.6" r="1.7"/><circle cx="93.2" cy="64.5" r="2.1"/><ellipse cx="111.8" cy="65.1" rx="2.5" ry="3.5" transform="rotate(1 111.8 65.1)"/><circle cx="109.9" cy="66.1" r="1.0"/><circle cx="109.8" cy="66.5" r="1.4"/><ellipse cx="56.7" cy="67.2" rx="1.5" ry="4.0" transform="rotate(-22 56.7 67.2)"/><circle cx="57.4" cy="64.9" r="0.9"/><circle cx="56.0" cy="69.2" r="0.8"/><ellipse cx="80.0" cy="70.7" rx="3.0" ry="3.0" transform="rotate(19 80.0 70.7)"/><circle cx="77.5" cy="71.8" r="1.6"/><circle cx="78.6" cy="72.3" r="1.5"/><ellipse cx="63.0" cy="79.2" rx="5.0" ry="4.0" transform="rotate(-5 63.0 79.2)"/><circle cx="60.1" cy="81.6" r="2.3"/><circle cx="60.2" cy="77.9" r="1.8"/><ellipse cx="75.8" cy="78.5" rx="3.0" ry="3.5" transform="rotate(-6 75.8 78.5)"/><circle cx="74.3" cy="77.0" r="1.2"/><circle cx="74.9" cy="80.7" r="1.2"/><ellipse cx="87.0" cy="79.2" rx="3.0" ry="3.0" transform="rotate(2 87.0 79.2)"/><circle cx="89.1" cy="78.1" r="1.6"/><circle cx="88.3" cy="76.8" r="1.7"/><ellipse cx="94.8" cy="77.0" rx="2.0" ry="2.5" transform="rotate(-3 94.8 77.0)"/><circle cx="94.3" cy="75.5" r="1.2"/><circle cx="93.7" cy="78.3" r="1.2"/><ellipse cx="99.8" cy="78.5" rx="2.0" ry="3.0" transform="rotate(-11 99.8 78.5)"/><circle cx="100.5" cy="81.0" r="1.0"/><circle cx="100.9" cy="79.4" r="0.9"/><ellipse cx="107.9" cy="75.6" rx="3.0" ry="5.0" transform="rotate(-25 107.9 75.6)"/><circle cx="108.9" cy="72.7" r="1.4"/><circle cx="106.1" cy="78.1" r="1.5"/><ellipse cx="56.0" cy="84.8" rx="2.0" ry="2.0" transform="rotate(6 56.0 84.8)"/><circle cx="55.2" cy="83.5" r="0.8"/><circle cx="57.7" cy="84.6" r="0.8"/><ellipse cx="66.6" cy="90.5" rx="4.5" ry="5.0" transform="rotate(-3 66.6 90.5)"/><circle cx="66.7" cy="85.8" r="1.9"/><circle cx="70.0" cy="90.7" r="2.2"/><ellipse cx="78.6" cy="88.3" rx="3.5" ry="3.5" transform="rotate(20 78.6 88.3)"/><circle cx="79.8" cy="86.1" r="1.7"/><circle cx="75.8" cy="86.7" r="1.5"/><ellipse cx="87.8" cy="86.2" rx="3.0" ry="2.5" transform="rotate(-5 87.8 86.2)"/><circle cx="89.9" cy="87.3" r="1.0"/><circle cx="90.0" cy="85.4" r="1.3"/><ellipse cx="94.8" cy="90.5" rx="3.0" ry="3.0" transform="rotate(-21 94.8 90.5)"/><circle cx="95.1" cy="92.8" r="1.7"/><circle cx="92.8" cy="90.0" r="1.8"/><ellipse cx="102.6" cy="90.5" rx="2.0" ry="3.5" transform="rotate(8 102.6 90.5)"/><circle cx="101.3" cy="90.1" r="0.9"/><circle cx="103.6" cy="89.2" r="1.0"/><ellipse cx="111.0" cy="84.8" rx="3.0" ry="3.0" transform="rotate(6 111.0 84.8)"/><circle cx="109.4" cy="86.9" r="1.7"/><circle cx="112.6" cy="82.8" r="1.3"/><ellipse cx="58.1" cy="96.1" rx="3.0" ry="4.0" transform="rotate(-22 58.1 96.1)"/><circle cx="56.2" cy="97.3" r="1.3"/><circle cx="59.5" cy="94.1" r="1.7"/><ellipse cx="89.2" cy="98.2" rx="4.0" ry="3.0" transform="rotate(22 89.2 98.2)"/><circle cx="91.9" cy="100.1" r="1.4"/><circle cx="89.8" cy="100.1" r="1.2"/><ellipse cx="96.9" cy="98.2" rx="3.0" ry="3.0" transform="rotate(-0 96.9 98.2)"/><circle cx="94.9" cy="100.0" r="1.7"/><circle cx="99.0" cy="99.0" r="1.4"/><ellipse cx="108.2" cy="94.7" rx="4.0" ry="3.0" transform="rotate(-16 108.2 94.7)"/><circle cx="108.2" cy="96.8" r="1.6"/><circle cx="106.8" cy="96.3" r="1.3"/><ellipse cx="73.6" cy="101.8" rx="3.0" ry="3.5" transform="rotate(-3 73.6 101.8)"/><circle cx="71.7" cy="100.8" r="1.6"/><circle cx="74.1" cy="104.7" r="1.6"/><ellipse cx="82.8" cy="106.0" rx="4.0" ry="3.0" transform="rotate(-16 82.8 106.0)"/><circle cx="82.8" cy="103.8" r="1.5"/><circle cx="80.1" cy="104.6" r="1.5"/><ellipse cx="63.8" cy="108.8" rx="4.0" ry="5.0" transform="rotate(-22 63.8 108.8)"/><circle cx="64.6" cy="104.4" r="2.0"/><circle cx="61.4" cy="107.1" r="2.3"/><ellipse cx="89.2" cy="111.6" rx="3.0" ry="4.0" transform="rotate(9 89.2 111.6)"/><circle cx="89.7" cy="115.1" r="1.8"/><circle cx="87.6" cy="114.7" r="1.5"/><ellipse cx="96.9" cy="110.2" rx="3.0" ry="4.0" transform="rotate(-16 96.9 110.2)"/><circle cx="96.5" cy="107.4" r="1.6"/><circle cx="95.2" cy="108.9" r="1.5"/><ellipse cx="105.4" cy="104.6" rx="3.5" ry="3.5" transform="rotate(18 105.4 104.6)"/><circle cx="102.7" cy="105.0" r="2.0"/><circle cx="102.8" cy="105.5" r="1.8"/><ellipse cx="111.8" cy="109.5" rx="2.5" ry="4.0" transform="rotate(16 111.8 109.5)"/><circle cx="112.3" cy="111.9" r="1.4"/><circle cx="110.1" cy="108.6" r="1.4"/><ellipse cx="58.1" cy="115.9" rx="3.0" ry="3.0" transform="rotate(19 58.1 115.9)"/><circle cx="55.4" cy="115.2" r="1.7"/><circle cx="58.1" cy="113.8" r="1.2"/><ellipse cx="69.4" cy="115.9" rx="3.0" ry="3.0" transform="rotate(9 69.4 115.9)"/><circle cx="69.2" cy="113.7" r="1.5"/><circle cx="67.5" cy="115.1" r="1.6"/><ellipse cx="82.8" cy="114.5" rx="3.0" ry="3.0" transform="rotate(3 82.8 114.5)"/><circle cx="81.4" cy="115.8" r="1.5"/><circle cx="81.7" cy="116.8" r="1.3"/><ellipse cx="94.1" cy="116.6" rx="3.0" ry="3.0" transform="rotate(-5 94.1 116.6)"/><circle cx="94.8" cy="118.7" r="1.5"/><circle cx="95.6" cy="117.8" r="1.5"/><ellipse cx="104.0" cy="115.9" rx="3.0" ry="3.0" transform="rotate(-15 104.0 115.9)"/><circle cx="102.0" cy="115.8" r="1.3"/><circle cx="101.3" cy="115.3" r="1.7"/></g><g fill="#0c0500" filter="url(#lb)"><ellipse cx="5.5" cy="6.9" rx="3.0" ry="5.0" transform="rotate(4 5.5 6.9)"/><circle cx="4.7" cy="4.2" r="1.4"/><circle cx="3.4" cy="8.4" r="1.3"/><ellipse cx="15.1" cy="4.8" rx="3.0" ry="4.0" transform="rotate(4 15.1 4.8)"/><circle cx="17.2" cy="4.0" r="1.5"/><circle cx="16.6" cy="6.7" r="1.6"/><ellipse cx="28.1" cy="11.7" rx="5.0" ry="6.0" transform="rotate(-19 28.1 11.7)"/><circle cx="31.6" cy="8.1" r="2.1"/><circle cx="31.5" cy="10.1" r="2.8"/><ellipse cx="39.0" cy="6.2" rx="4.0" ry="6.0" transform="rotate(13 39.0 6.2)"/><circle cx="38.1" cy="11.0" r="2.1"/><circle cx="40.0" cy="2.3" r="2.2"/><ellipse cx="51.3" cy="7.6" rx="3.5" ry="4.0" transform="rotate(23 51.3 7.6)"/><circle cx="50.0" cy="4.8" r="1.5"/><circle cx="48.8" cy="7.7" r="1.9"/><ellipse cx="11.0" cy="16.5" rx="5.5" ry="4.5" transform="rotate(9 11.0 16.5)"/><circle cx="7.7" cy="15.3" r="2.4"/><circle cx="8.5" cy="14.3" r="2.6"/><ellipse cx="46.5" cy="17.8" rx="4.0" ry="5.5" transform="rotate(8 46.5 17.8)"/><circle cx="49.2" cy="21.4" r="1.7"/><circle cx="44.8" cy="21.9" r="2.1"/><ellipse cx="21.2" cy="25.3" rx="8.0" ry="6.0" transform="rotate(3 21.2 25.3)"/><circle cx="17.5" cy="21.7" r="2.8"/><circle cx="23.4" cy="28.7" r="3.3"/><ellipse cx="4.2" cy="30.8" rx="4.0" ry="7.0" transform="rotate(13 4.2 30.8)"/><circle cx="0.9" cy="29.2" r="1.9"/><circle cx="3.9" cy="35.9" r="2.3"/><ellipse cx="41.7" cy="33.5" rx="7.0" ry="7.0" transform="rotate(-23 41.7 33.5)"/><circle cx="36.9" cy="33.4" r="3.9"/><circle cx="38.6" cy="37.5" r="3.4"/><ellipse cx="54.0" cy="39.0" rx="3.5" ry="5.0" transform="rotate(2 54.0 39.0)"/><circle cx="54.3" cy="35.4" r="2.0"/><circle cx="55.9" cy="41.2" r="1.5"/><ellipse cx="21.9" cy="39.7" rx="7.0" ry="4.5" transform="rotate(-19 21.9 39.7)"/><circle cx="23.0" cy="35.9" r="2.0"/><circle cx="23.8" cy="42.8" r="2.5"/><ellipse cx="8.3" cy="47.2" rx="5.0" ry="5.0" transform="rotate(16 8.3 47.2)"/><circle cx="8.3" cy="43.2" r="2.1"/><circle cx="5.6" cy="49.2" r="2.5"/><ellipse cx="24.0" cy="52.0" rx="4.0" ry="6.0" transform="rotate(3 24.0 52.0)"/><circle cx="24.8" cy="55.9" r="2.2"/><circle cx="27.5" cy="53.0" r="2.3"/><ellipse cx="36.3" cy="47.2" rx="3.5" ry="4.0" transform="rotate(22 36.3 47.2)"/><circle cx="34.2" cy="49.3" r="1.8"/><circle cx="34.1" cy="44.4" r="1.9"/><ellipse cx="47.2" cy="52.0" rx="4.0" ry="5.0" transform="rotate(-10 47.2 52.0)"/><circle cx="49.2" cy="49.0" r="2.1"/><circle cx="46.9" cy="49.0" r="2.2"/><ellipse cx="54.7" cy="24.0" rx="3.0" ry="4.0" transform="rotate(8 54.7 24.0)"/><circle cx="52.4" cy="24.2" r="1.5"/><circle cx="55.5" cy="26.9" r="1.2"/><ellipse cx="13.7" cy="55.4" rx="3.0" ry="3.0" transform="rotate(0 13.7 55.4)"/><circle cx="12.3" cy="53.6" r="1.5"/><circle cx="16.3" cy="54.7" r="1.3"/><ellipse cx="59.4" cy="3.5" rx="3.0" ry="3.5" transform="rotate(15 59.4 3.5)"/><circle cx="58.1" cy="2.0" r="1.4"/><circle cx="59.6" cy="5.7" r="1.5"/><ellipse cx="64.2" cy="10.3" rx="4.0" ry="4.5" transform="rotate(21 64.2 10.3)"/><circle cx="62.6" cy="13.9" r="2.2"/><circle cx="66.6" cy="13.3" r="2.1"/><ellipse cx="74.5" cy="8.9" rx="4.0" ry="5.0" transform="rotate(21 74.5 8.9)"/><circle cx="73.8" cy="4.7" r="1.9"/><circle cx="75.8" cy="4.6" r="2.3"/><ellipse cx="72.4" cy="16.5" rx="2.5" ry="3.5" transform="rotate(-3 72.4 16.5)"/><circle cx="72.5" cy="13.8" r="1.1"/><circle cx="73.9" cy="17.1" r="1.1"/><ellipse cx="62.8" cy="23.3" rx="4.0" ry="5.5" transform="rotate(-17 62.8 23.3)"/><circle cx="59.4" cy="23.4" r="2.0"/><circle cx="59.9" cy="25.4" r="1.8"/><ellipse cx="84.7" cy="4.2" rx="3.0" ry="3.0" transform="rotate(-2 84.7 4.2)"/><circle cx="84.8" cy="2.0" r="1.3"/><circle cx="86.8" cy="2.7" r="1.4"/><ellipse cx="86.8" cy="10.3" rx="2.5" ry="4.0" transform="rotate(-6 86.8 10.3)"/><circle cx="84.8" cy="9.7" r="1.1"/><circle cx="88.5" cy="10.3" r="1.4"/><ellipse cx="92.2" cy="2.1" rx="2.5" ry="2.0" transform="rotate(-18 92.2 2.1)"/><circle cx="90.6" cy="2.4" r="0.9"/><circle cx="93.1" cy="3.4" r="0.9"/><ellipse cx="99.7" cy="6.9" rx="3.0" ry="3.0" transform="rotate(-24 99.7 6.9)"/><circle cx="101.2" cy="8.2" r="1.5"/><circle cx="101.4" cy="7.6" r="1.5"/><ellipse cx="110.7" cy="3.5" rx="3.0" ry="3.5" transform="rotate(-5 110.7 3.5)"/><circle cx="110.2" cy="1.4" r="1.4"/><circle cx="109.2" cy="4.8" r="1.8"/><ellipse cx="92.9" cy="15.8" rx="3.0" ry="3.5" transform="rotate(-14 92.9 15.8)"/><circle cx="94.8" cy="17.3" r="1.3"/><circle cx="91.3" cy="14.0" r="1.3"/><ellipse cx="102.5" cy="17.8" rx="3.5" ry="4.0" transform="rotate(-22 102.5 17.8)"/><circle cx="102.2" cy="15.0" r="2.0"/><circle cx="99.3" cy="18.6" r="1.6"/><ellipse cx="82.0" cy="21.2" rx="3.0" ry="3.5" transform="rotate(-13 82.0 21.2)"/><circle cx="81.7" cy="24.3" r="1.6"/><circle cx="80.9" cy="23.0" r="1.6"/><ellipse cx="90.2" cy="23.3" rx="4.0" ry="3.0" transform="rotate(23 90.2 23.3)"/><circle cx="88.2" cy="22.3" r="1.2"/><circle cx="92.4" cy="24.4" r="1.2"/><ellipse cx="110.0" cy="20.6" rx="3.0" ry="5.0" transform="rotate(-22 110.0 20.6)"/><circle cx="108.4" cy="16.8" r="1.3"/><circle cx="112.3" cy="20.0" r="1.7"/><ellipse cx="73.8" cy="25.3" rx="3.0" ry="3.0" transform="rotate(21 73.8 25.3)"/><circle cx="75.5" cy="24.6" r="1.4"/><circle cx="71.6" cy="23.6" r="1.3"/><ellipse cx="73.1" cy="32.2" rx="4.0" ry="4.0" transform="rotate(-10 73.1 32.2)"/><circle cx="74.6" cy="30.1" r="1.9"/><circle cx="71.4" cy="35.1" r="2.3"/><ellipse cx="80.6" cy="34.2" rx="2.0" ry="2.0" transform="rotate(-16 80.6 34.2)"/><circle cx="80.5" cy="32.5" r="1.1"/><circle cx="78.9" cy="33.6" r="0.9"/><ellipse cx="90.2" cy="35.6" rx="3.0" ry="4.0" transform="rotate(-4 90.2 35.6)"/><circle cx="90.5" cy="39.1" r="1.5"/><circle cx="90.0" cy="38.2" r="1.6"/><ellipse cx="101.1" cy="36.3" rx="5.0" ry="3.0" transform="rotate(5 101.1 36.3)"/><circle cx="100.2" cy="34.2" r="1.5"/><circle cx="103.5" cy="38.4" r="1.2"/><ellipse cx="112.0" cy="28.8" rx="2.0" ry="4.0" transform="rotate(-2 112.0 28.8)"/><circle cx="112.1" cy="25.5" r="0.8"/><circle cx="112.1" cy="32.4" r="1.1"/><ellipse cx="58.7" cy="42.4" rx="3.5" ry="7.0" transform="rotate(19 58.7 42.4)"/><circle cx="60.5" cy="38.6" r="2.0"/><circle cx="58.4" cy="37.4" r="1.7"/><ellipse cx="70.4" cy="43.1" rx="5.0" ry="4.5" transform="rotate(-21 70.4 43.1)"/><circle cx="66.6" cy="45.6" r="1.9"/><circle cx="67.5" cy="41.9" r="1.9"/><ellipse cx="83.3" cy="41.1" rx="3.5" ry="3.0" transform="rotate(7 83.3 41.1)"/><circle cx="83.4" cy="42.9" r="1.3"/><circle cx="81.6" cy="39.2" r="1.2"/><ellipse cx="94.3" cy="44.5" rx="3.0" ry="3.0" transform="rotate(-14 94.3 44.5)"/><circle cx="96.3" cy="44.1" r="1.5"/><circle cx="92.0" cy="45.8" r="1.6"/><ellipse cx="100.4" cy="44.5" rx="2.0" ry="2.5" transform="rotate(14 100.4 44.5)"/><circle cx="99.1" cy="44.1" r="0.9"/><circle cx="102.0" cy="45.6" r="0.8"/><ellipse cx="110.0" cy="40.4" rx="3.0" ry="4.0" transform="rotate(-24 110.0 40.4)"/><circle cx="112.0" cy="39.8" r="1.7"/><circle cx="112.0" cy="42.0" r="1.3"/><ellipse cx="79.2" cy="52.0" rx="4.0" ry="3.5" transform="rotate(16 79.2 52.0)"/><circle cx="76.7" cy="50.1" r="1.9"/><circle cx="81.2" cy="50.2" r="1.8"/><ellipse cx="88.8" cy="50.6" rx="3.0" ry="3.5" transform="rotate(-3 88.8 50.6)"/><circle cx="90.9" cy="52.6" r="1.6"/><circle cx="89.6" cy="48.4" r="1.5"/><ellipse cx="67.6" cy="54.7" rx="3.5" ry="3.5" transform="rotate(-2 67.6 54.7)"/><circle cx="67.3" cy="52.5" r="1.6"/><circle cx="65.4" cy="54.9" r="1.8"/><ellipse cx="96.3" cy="54.7" rx="3.0" ry="3.0" transform="rotate(12 96.3 54.7)"/><circle cx="94.1" cy="55.9" r="1.6"/><circle cx="96.8" cy="56.8" r="1.8"/><ellipse cx="103.8" cy="51.3" rx="3.0" ry="3.5" transform="rotate(-8 103.8 51.3)"/><circle cx="102.1" cy="52.2" r="1.3"/><circle cx="105.2" cy="54.1" r="1.6"/><ellipse cx="112.0" cy="50.6" rx="2.0" ry="4.0" transform="rotate(19 112.0 50.6)"/><circle cx="113.6" cy="50.3" r="1.2"/><circle cx="110.5" cy="49.9" r="1.2"/><ellipse cx="58.7" cy="56.8" rx="3.0" ry="3.0" transform="rotate(20 58.7 56.8)"/><circle cx="60.9" cy="56.1" r="1.7"/><circle cx="56.3" cy="58.4" r="1.8"/><ellipse cx="2.9" cy="65.1" rx="3.0" ry="4.0" transform="rotate(-10 2.9 65.1)"/><circle cx="4.7" cy="64.0" r="1.3"/><circle cx="2.5" cy="62.3" r="1.5"/><ellipse cx="10.7" cy="63.6" rx="5.0" ry="3.5" transform="rotate(7 10.7 63.6)"/><circle cx="14.9" cy="64.4" r="1.6"/><circle cx="7.4" cy="64.6" r="1.9"/><ellipse cx="22.0" cy="62.9" rx="4.0" ry="3.0" transform="rotate(12 22.0 62.9)"/><circle cx="21.4" cy="64.8" r="1.4"/><circle cx="19.9" cy="63.9" r="1.3"/><ellipse cx="39.6" cy="60.8" rx="7.0" ry="3.5" transform="rotate(13 39.6 60.8)"/><circle cx="37.6" cy="57.7" r="2.1"/><circle cx="43.2" cy="59.0" r="1.5"/><ellipse cx="54.5" cy="65.1" rx="3.0" ry="5.5" transform="rotate(-9 54.5 65.1)"/><circle cx="52.2" cy="66.1" r="1.5"/><circle cx="52.8" cy="68.9" r="1.4"/><ellipse cx="7.2" cy="77.0" rx="3.5" ry="4.0" transform="rotate(-2 7.2 77.0)"/><circle cx="9.5" cy="74.7" r="1.6"/><circle cx="7.3" cy="80.5" r="1.4"/><ellipse cx="15.6" cy="75.6" rx="3.0" ry="3.0" transform="rotate(-18 15.6 75.6)"/><circle cx="13.3" cy="75.1" r="1.3"/><circle cx="17.5" cy="76.2" r="1.7"/><ellipse cx="24.8" cy="74.2" rx="4.0" ry="3.5" transform="rotate(-2 24.8 74.2)"/><circle cx="28.3" cy="73.8" r="2.1"/><circle cx="27.4" cy="74.7" r="1.4"/><ellipse cx="37.5" cy="76.3" rx="4.0" ry="6.0" transform="rotate(-3 37.5 76.3)"/><circle cx="36.2" cy="79.5" r="2.0"/><circle cx="39.9" cy="78.7" r="1.8"/><ellipse cx="49.5" cy="74.9" rx="4.0" ry="4.0" transform="rotate(15 49.5 74.9)"/><circle cx="47.1" cy="76.3" r="1.6"/><circle cx="46.5" cy="76.3" r="2.1"/><ellipse cx="2.2" cy="84.8" rx="2.5" ry="6.0" transform="rotate(21 2.2 84.8)"/><circle cx="2.8" cy="81.0" r="1.1"/><circle cx="2.3" cy="79.5" r="1.3"/><ellipse cx="10.0" cy="86.2" rx="2.0" ry="2.0" transform="rotate(17 10.0 86.2)"/><circle cx="8.7" cy="85.8" r="0.9"/><circle cx="11.6" cy="86.4" r="1.2"/><ellipse cx="17.0" cy="83.4" rx="3.0" ry="3.0" transform="rotate(20 17.0 83.4)"/><circle cx="14.6" cy="83.9" r="1.8"/><circle cx="18.0" cy="81.2" r="1.4"/><ellipse cx="25.5" cy="83.4" rx="3.0" ry="3.5" transform="rotate(1 25.5 83.4)"/><circle cx="26.5" cy="85.4" r="1.6"/><circle cx="27.9" cy="83.3" r="1.4"/><ellipse cx="52.3" cy="85.5" rx="5.0" ry="2.5" transform="rotate(-7 52.3 85.5)"/><circle cx="48.1" cy="86.1" r="1.2"/><circle cx="55.5" cy="85.1" r="1.2"/><ellipse cx="28.3" cy="91.9" rx="3.0" ry="5.0" transform="rotate(1 28.3 91.9)"/><circle cx="26.0" cy="94.3" r="1.7"/><circle cx="30.5" cy="90.2" r="1.2"/><ellipse cx="17.0" cy="93.3" rx="3.0" ry="3.5" transform="rotate(4 17.0 93.3)"/><circle cx="14.8" cy="92.5" r="1.4"/><circle cx="16.3" cy="90.2" r="1.3"/><ellipse cx="8.6" cy="95.4" rx="3.5" ry="3.5" transform="rotate(8 8.6 95.4)"/><circle cx="6.7" cy="97.4" r="2.0"/><circle cx="11.4" cy="94.7" r="1.5"/><ellipse cx="41.8" cy="93.3" rx="4.0" ry="5.5" transform="rotate(21 41.8 93.3)"/><circle cx="43.0" cy="97.0" r="2.3"/><circle cx="40.7" cy="96.8" r="2.4"/><ellipse cx="53.0" cy="97.5" rx="4.0" ry="4.0" transform="rotate(22 53.0 97.5)"/><circle cx="51.8" cy="100.2" r="1.8"/><circle cx="54.9" cy="99.5" r="2.4"/><ellipse cx="1.5" cy="101.8" rx="2.0" ry="3.0" transform="rotate(-21 1.5 101.8)"/><circle cx="1.7" cy="103.8" r="0.8"/><circle cx="-0.2" cy="101.4" r="1.1"/><ellipse cx="17.8" cy="102.5" rx="3.5" ry="3.5" transform="rotate(7 17.8 102.5)"/><circle cx="18.7" cy="100.6" r="1.6"/><circle cx="19.9" cy="102.0" r="1.6"/><ellipse cx="32.6" cy="101.0" rx="3.0" ry="4.0" transform="rotate(-1 32.6 101.0)"/><circle cx="32.3" cy="104.1" r="1.2"/><circle cx="32.8" cy="104.7" r="1.3"/><ellipse cx="10.0" cy="108.8" rx="4.0" ry="4.0" transform="rotate(20 10.0 108.8)"/><circle cx="11.7" cy="112.2" r="2.1"/><circle cx="8.4" cy="106.7" r="1.6"/><ellipse cx="26.9" cy="106.0" rx="3.0" ry="4.0" transform="rotate(13 26.9 106.0)"/><circle cx="27.8" cy="108.4" r="1.7"/><circle cx="28.2" cy="104.3" r="1.8"/><ellipse cx="43.2" cy="107.4" rx="3.0" ry="3.5" transform="rotate(2 43.2 107.4)"/><circle cx="41.8" cy="108.9" r="1.4"/><circle cx="45.3" cy="107.2" r="1.3"/><ellipse cx="53.8" cy="111.6" rx="4.0" ry="5.5" transform="rotate(-18 53.8 111.6)"/><circle cx="55.8" cy="114.4" r="2.3"/><circle cx="56.2" cy="113.3" r="2.4"/><ellipse cx="5.8" cy="115.9" rx="3.5" ry="3.0" transform="rotate(25 5.8 115.9)"/><circle cx="8.2" cy="115.6" r="1.4"/><circle cx="8.4" cy="115.2" r="1.6"/><ellipse cx="22.0" cy="114.5" rx="4.0" ry="3.5" transform="rotate(-9 22.0 114.5)"/><circle cx="24.9" cy="114.8" r="1.9"/><circle cx="22.6" cy="111.8" r="1.7"/><ellipse cx="37.5" cy="115.9" rx="3.0" ry="3.0" transform="rotate(2 37.5 115.9)"/><circle cx="35.3" cy="116.7" r="1.7"/><circle cx="38.2" cy="118.2" r="1.8"/><ellipse cx="58.8" cy="59.4" rx="3.5" ry="2.0" transform="rotate(17 58.8 59.4)"/><circle cx="60.2" cy="61.1" r="1.1"/><circle cx="60.0" cy="60.6" r="0.9"/><ellipse cx="77.2" cy="60.1" rx="5.0" ry="3.0" transform="rotate(-22 77.2 60.1)"/><circle cx="80.9" cy="59.8" r="1.7"/><circle cx="79.5" cy="61.3" r="1.7"/><ellipse cx="89.2" cy="59.4" rx="3.0" ry="2.0" transform="rotate(15 89.2 59.4)"/><circle cx="91.7" cy="59.3" r="1.0"/><circle cx="89.4" cy="58.1" r="1.0"/><ellipse cx="105.4" cy="59.4" rx="4.0" ry="3.0" transform="rotate(-3 105.4 59.4)"/><circle cx="107.4" cy="61.3" r="1.4"/><circle cx="102.5" cy="59.3" r="1.4"/><ellipse cx="68.0" cy="68.6" rx="5.0" ry="4.0" transform="rotate(-7 68.0 68.6)"/><circle cx="64.2" cy="66.4" r="2.3"/><circle cx="70.9" cy="65.9" r="1.8"/><ellipse cx="86.3" cy="67.2" rx="3.0" ry="3.0" transform="rotate(24 86.3 67.2)"/><circle cx="86.1" cy="69.1" r="1.5"/><circle cx="86.1" cy="65.1" r="1.6"/><ellipse cx="97.6" cy="65.1" rx="5.0" ry="3.5" transform="rotate(-11 97.6 65.1)"/><circle cx="101.3" cy="64.6" r="1.7"/><circle cx="93.2" cy="64.5" r="2.1"/><ellipse cx="111.8" cy="65.1" rx="2.5" ry="3.5" transform="rotate(1 111.8 65.1)"/><circle cx="109.9" cy="66.1" r="1.0"/><circle cx="109.8" cy="66.5" r="1.4"/><ellipse cx="56.7" cy="67.2" rx="1.5" ry="4.0" transform="rotate(-22 56.7 67.2)"/><circle cx="57.4" cy="64.9" r="0.9"/><circle cx="56.0" cy="69.2" r="0.8"/><ellipse cx="80.0" cy="70.7" rx="3.0" ry="3.0" transform="rotate(19 80.0 70.7)"/><circle cx="77.5" cy="71.8" r="1.6"/><circle cx="78.6" cy="72.3" r="1.5"/><ellipse cx="63.0" cy="79.2" rx="5.0" ry="4.0" transform="rotate(-5 63.0 79.2)"/><circle cx="60.1" cy="81.6" r="2.3"/><circle cx="60.2" cy="77.9" r="1.8"/><ellipse cx="75.8" cy="78.5" rx="3.0" ry="3.5" transform="rotate(-6 75.8 78.5)"/><circle cx="74.3" cy="77.0" r="1.2"/><circle cx="74.9" cy="80.7" r="1.2"/><ellipse cx="87.0" cy="79.2" rx="3.0" ry="3.0" transform="rotate(2 87.0 79.2)"/><circle cx="89.1" cy="78.1" r="1.6"/><circle cx="88.3" cy="76.8" r="1.7"/><ellipse cx="94.8" cy="77.0" rx="2.0" ry="2.5" transform="rotate(-3 94.8 77.0)"/><circle cx="94.3" cy="75.5" r="1.2"/><circle cx="93.7" cy="78.3" r="1.2"/><ellipse cx="99.8" cy="78.5" rx="2.0" ry="3.0" transform="rotate(-11 99.8 78.5)"/><circle cx="100.5" cy="81.0" r="1.0"/><circle cx="100.9" cy="79.4" r="0.9"/><ellipse cx="107.9" cy="75.6" rx="3.0" ry="5.0" transform="rotate(-25 107.9 75.6)"/><circle cx="108.9" cy="72.7" r="1.4"/><circle cx="106.1" cy="78.1" r="1.5"/><ellipse cx="56.0" cy="84.8" rx="2.0" ry="2.0" transform="rotate(6 56.0 84.8)"/><circle cx="55.2" cy="83.5" r="0.8"/><circle cx="57.7" cy="84.6" r="0.8"/><ellipse cx="66.6" cy="90.5" rx="4.5" ry="5.0" transform="rotate(-3 66.6 90.5)"/><circle cx="66.7" cy="85.8" r="1.9"/><circle cx="70.0" cy="90.7" r="2.2"/><ellipse cx="78.6" cy="88.3" rx="3.5" ry="3.5" transform="rotate(20 78.6 88.3)"/><circle cx="79.8" cy="86.1" r="1.7"/><circle cx="75.8" cy="86.7" r="1.5"/><ellipse cx="87.8" cy="86.2" rx="3.0" ry="2.5" transform="rotate(-5 87.8 86.2)"/><circle cx="89.9" cy="87.3" r="1.0"/><circle cx="90.0" cy="85.4" r="1.3"/><ellipse cx="94.8" cy="90.5" rx="3.0" ry="3.0" transform="rotate(-21 94.8 90.5)"/><circle cx="95.1" cy="92.8" r="1.7"/><circle cx="92.8" cy="90.0" r="1.8"/><ellipse cx="102.6" cy="90.5" rx="2.0" ry="3.5" transform="rotate(8 102.6 90.5)"/><circle cx="101.3" cy="90.1" r="0.9"/><circle cx="103.6" cy="89.2" r="1.0"/><ellipse cx="111.0" cy="84.8" rx="3.0" ry="3.0" transform="rotate(6 111.0 84.8)"/><circle cx="109.4" cy="86.9" r="1.7"/><circle cx="112.6" cy="82.8" r="1.3"/><ellipse cx="58.1" cy="96.1" rx="3.0" ry="4.0" transform="rotate(-22 58.1 96.1)"/><circle cx="56.2" cy="97.3" r="1.3"/><circle cx="59.5" cy="94.1" r="1.7"/><ellipse cx="89.2" cy="98.2" rx="4.0" ry="3.0" transform="rotate(22 89.2 98.2)"/><circle cx="91.9" cy="100.1" r="1.4"/><circle cx="89.8" cy="100.1" r="1.2"/><ellipse cx="96.9" cy="98.2" rx="3.0" ry="3.0" transform="rotate(-0 96.9 98.2)"/><circle cx="94.9" cy="100.0" r="1.7"/><circle cx="99.0" cy="99.0" r="1.4"/><ellipse cx="108.2" cy="94.7" rx="4.0" ry="3.0" transform="rotate(-16 108.2 94.7)"/><circle cx="108.2" cy="96.8" r="1.6"/><circle cx="106.8" cy="96.3" r="1.3"/><ellipse cx="73.6" cy="101.8" rx="3.0" ry="3.5" transform="rotate(-3 73.6 101.8)"/><circle cx="71.7" cy="100.8" r="1.6"/><circle cx="74.1" cy="104.7" r="1.6"/><ellipse cx="82.8" cy="106.0" rx="4.0" ry="3.0" transform="rotate(-16 82.8 106.0)"/><circle cx="82.8" cy="103.8" r="1.5"/><circle cx="80.1" cy="104.6" r="1.5"/><ellipse cx="63.8" cy="108.8" rx="4.0" ry="5.0" transform="rotate(-22 63.8 108.8)"/><circle cx="64.6" cy="104.4" r="2.0"/><circle cx="61.4" cy="107.1" r="2.3"/><ellipse cx="89.2" cy="111.6" rx="3.0" ry="4.0" transform="rotate(9 89.2 111.6)"/><circle cx="89.7" cy="115.1" r="1.8"/><circle cx="87.6" cy="114.7" r="1.5"/><ellipse cx="96.9" cy="110.2" rx="3.0" ry="4.0" transform="rotate(-16 96.9 110.2)"/><circle cx="96.5" cy="107.4" r="1.6"/><circle cx="95.2" cy="108.9" r="1.5"/><ellipse cx="105.4" cy="104.6" rx="3.5" ry="3.5" transform="rotate(18 105.4 104.6)"/><circle cx="102.7" cy="105.0" r="2.0"/><circle cx="102.8" cy="105.5" r="1.8"/><ellipse cx="111.8" cy="109.5" rx="2.5" ry="4.0" transform="rotate(16 111.8 109.5)"/><circle cx="112.3" cy="111.9" r="1.4"/><circle cx="110.1" cy="108.6" r="1.4"/><ellipse cx="58.1" cy="115.9" rx="3.0" ry="3.0" transform="rotate(19 58.1 115.9)"/><circle cx="55.4" cy="115.2" r="1.7"/><circle cx="58.1" cy="113.8" r="1.2"/><ellipse cx="69.4" cy="115.9" rx="3.0" ry="3.0" transform="rotate(9 69.4 115.9)"/><circle cx="69.2" cy="113.7" r="1.5"/><circle cx="67.5" cy="115.1" r="1.6"/><ellipse cx="82.8" cy="114.5" rx="3.0" ry="3.0" transform="rotate(3 82.8 114.5)"/><circle cx="81.4" cy="115.8" r="1.5"/><circle cx="81.7" cy="116.8" r="1.3"/><ellipse cx="94.1" cy="116.6" rx="3.0" ry="3.0" transform="rotate(-5 94.1 116.6)"/><circle cx="94.8" cy="118.7" r="1.5"/><circle cx="95.6" cy="117.8" r="1.5"/><ellipse cx="104.0" cy="115.9" rx="3.0" ry="3.0" transform="rotate(-15 104.0 115.9)"/><circle cx="102.0" cy="115.8" r="1.3"/><circle cx="101.3" cy="115.3" r="1.7"/></g></g></svg></div><div class="row out" style="top:135px">59281814:Bitmap [C]</div><div class="port c" style="left:105px;top:139px"></div><div class="row in" style="top:150px">TextureCoord (TextureCoord)</div><div class="port sq" style="left:4px;top:154px"></div></div>
 <svg class="wires" width="918" height="884" viewBox="0 0 918 884"><path d="M199.5,414.5 C219.0,414.5 258.0,429.5 277.5,429.5" fill="none" stroke="#00008c" stroke-width="1" shape-rendering="crispEdges"/><path d="M238.50,422.00 L227.70,423.88 L229.93,415.16 Z" fill="#00008c"/><path d="M199.5,414.5 C261.5,414.5 385.5,379.5 447.5,379.5" fill="none" stroke="#00008c" stroke-width="1" shape-rendering="crispEdges"/><path d="M323.50,397.00 L314.50,403.27 L312.84,394.43 Z" fill="#00008c"/><path d="M219.5,514.5 C234.0,514.5 263.0,444.5 277.5,444.5" fill="none" stroke="#00008c" stroke-width="1" shape-rendering="crispEdges"/><path d="M248.50,479.50 L247.04,490.37 L239.40,485.62 Z" fill="#00008c"/><path d="M379.5,354.5 C396.5,354.5 430.5,394.5 447.5,394.5" fill="none" stroke="#00008c" stroke-width="1" shape-rendering="crispEdges"/><path d="M413.50,374.50 L402.85,371.87 L408.41,364.79 Z" fill="#00008c"/><path d="M379.5,369.5 C396.5,369.5 430.5,409.5 447.5,409.5" fill="none" stroke="#00008c" stroke-width="1" shape-rendering="crispEdges"/><path d="M413.50,389.50 L402.85,386.87 L408.41,379.79 Z" fill="#00008c"/><path d="M379.5,414.5 C396.5,414.5 430.5,424.5 447.5,424.5" fill="none" stroke="#00008c" stroke-width="1" shape-rendering="crispEdges"/><path d="M413.50,419.50 L402.82,421.99 L404.55,413.16 Z" fill="#00008c"/><path d="M549.5,364.5 C569.0,364.5 608.0,429.5 627.5,429.5" fill="none" stroke="#00008c" stroke-width="1" shape-rendering="crispEdges"/><path d="M588.50,397.00 L578.47,392.58 L585.16,386.56 Z" fill="#00008c"/><path d="M729.5,414.5 C748.5,414.5 786.5,64.5 805.5,64.5" fill="none" stroke="#00008c" stroke-width="1" shape-rendering="crispEdges"/><path d="M767.50,239.50 L770.33,250.09 L761.45,248.65 Z" fill="#00008c"/></svg>
 </div>
 <div class="pill" style="left:-1px">Arithmetic</div><div class="pill" style="left:79px">BLOP</div><div class="pill" style="left:159px">Convert</div><div class="pill" style="left:239px">Function</div><div class="pill" style="left:319px">Input</div><div class="pill" style="left:399px">Logic</div><div class="pill" style="left:479px">Object</div><div class="pill" style="left:559px">System</div><div class="pill" style="left:639px">Transform</div><div class="pill" style="left:719px">Trigonometry</div><div class="pill" style="left:799px">Vector</div>
 <div id="selnode">Select Output Node</div>
</div>

<div id="rpanel"></div>
<div class="bx" style="left:919px;top:40px;width:179px;height:3px;background:#2c2c2c"></div>
<div class="bx" style="left:919px;top:43px;width:2px;height:17px;background:#3a3a3a"></div>
<div class="bx" style="left:921px;top:43px;width:57px;height:16px;background:#3b7fdb"></div>
<div class="pt" style="left:921px;top:45px;width:57px;text-align:center;color:#dcdcf0">&gt;AUTO</div>
<div class="bx" style="left:978px;top:43px;width:4px;height:17px;background:#383838"></div>
<div class="bx" style="left:982px;top:43px;width:116px;height:16px;background:#474747"></div>
<div class="pt" style="left:982px;top:45px;width:116px;text-align:center">UPDATE</div>
<div class="bx" style="left:919px;top:59px;width:179px;height:2px;background:#0e0e0e"></div>

<div class="bx" style="left:924px;top:74px;width:170px;height:368px;border:1px solid #1c1c1c;border-top:none"></div>
<div class="bx" style="left:924px;top:74px;width:4px;height:1px;background:#1c1c1c"></div>
<div class="bx" style="left:1090px;top:74px;width:4px;height:1px;background:#1c1c1c"></div>
<div class="roll" style="left:928px;top:66px;width:163px;height:16px"></div>
<div class="bx" style="left:932px;top:74px;width:5px;height:1px;background:#e8e8e8"></div>
<div class="pt" style="left:928px;top:68px;width:163px;text-align:center">Output</div>

<div class="chk" style="left:934px;top:87px"></div>
<svg class="bx" style="left:936px;top:89px" width="10" height="10" viewBox="0 0 10 10"><path d="M1.5 4.5 L4 7 L8.5 2" fill="none" stroke="#f0f0f0" stroke-width="2"/></svg>
<div class="pt" style="left:952px;top:88px">Enable</div>
<div class="chk" style="left:1023px;top:87px"></div>
<div class="pt" style="left:1041px;top:88px">Collapse</div>

<div class="pt" style="left:932px;top:102px">Channel Name:</div>
<div class="bx" style="left:930px;top:116px;width:160px;height:17px;background:#585858;border-top:1px solid #7c7c7c;border-left:1px solid #7c7c7c;border-bottom:2px solid #f4f2ec;border-right:1px solid #f4f2ec"></div>
<div class="pt" style="left:936px;top:119px">Color</div>
<div class="bx" style="left:930px;top:135px;width:160px;height:17px;background:#464646;border-top:1px solid #7c7c7c;border-left:1px solid #7c7c7c;border-bottom:2px solid #f4f2ec;border-right:1px solid #f4f2ec"></div>
<div class="pt" style="left:936px;top:138px">Will Be Stored In PCache</div>
<div class="pt" style="left:932px;top:158px">Standard Channel Names:</div>

<div class="lst" style="left:929px;top:173px;width:160px;height:135px"></div>
<div class="lrow sel" style="left:931px;top:176px;width:138px">Color</div>
<div class="lrow" style="left:931px;top:189px;width:138px">Density</div>
<div class="lrow" style="left:931px;top:202px;width:138px">Distance</div>
<div class="lrow" style="left:931px;top:215px;width:138px">HairLength</div>
<div class="lrow" style="left:931px;top:228px;width:138px">HairRoot</div>
<div class="lrow" style="left:931px;top:241px;width:138px">Normal</div>
<div class="lrow" style="left:931px;top:254px;width:138px">Position</div>
<div class="lrow" style="left:931px;top:267px;width:138px">ReferencePosition</div>
<div class="lrow" style="left:931px;top:280px;width:138px">SplineID</div>
<div class="lrow" style="left:931px;top:293px;width:138px">Tangent</div>

<div class="bx" style="left:1070px;top:176px;width:16px;height:129px;background:repeating-conic-gradient(#d4d0c8 0 25%,#fff 0 50%) 0 0/2px 2px"></div>
<div class="sbtn" style="left:1070px;top:176px;width:16px;height:16px"></div>
<svg class="bx" style="left:1074px;top:181px" width="8" height="5"><path d="M0 4 L4 0 L8 4 Z" fill="#000"/></svg>
<div class="sbtn" style="left:1070px;top:192px;width:16px;height:89px"></div>
<div class="sbtn" style="left:1070px;top:291px;width:16px;height:14px"></div>
<svg class="bx" style="left:1074px;top:296px" width="8" height="5"><path d="M0 0 L8 0 L4 4 Z" fill="#000"/></svg>

<div class="pt" style="left:932px;top:317px">Data Type:</div>
<div class="pt" style="left:1032px;top:316px;color:#1e1e1e">Arity:</div>
<div class="lst" style="left:929px;top:331px;width:99px;height:58px"></div>
<div class="lrow sel" style="left:931px;top:334px;width:95px">float16</div>
<div class="lrow" style="left:931px;top:347px;width:95px">float32</div>
<div class="lrow" style="left:931px;top:360px;width:95px">float64</div>
<div class="lst" style="left:1029px;top:331px;width:60px;height:58px"></div>
<div class="lrow" style="left:1031px;top:334px;width:56px;color:#8a8a8a">1</div>
<div class="lrow" style="left:1031px;top:347px;width:56px;color:#8a8a8a">2</div>
<div class="lrow sel" style="left:1031px;top:360px;width:56px;color:#8a8a8a">3</div>
<div class="lrow" style="left:1031px;top:373px;width:56px;color:#8a8a8a">4</div>

<div class="pt" style="left:932px;top:396px">Channel List Sorting:</div>
<div class="bx" style="left:929px;top:414px;width:160px;height:21px;background:#555;border:2px solid #141414;border-right-color:#2c2c2c;border-bottom-color:#2c2c2c"></div>
<div class="pt" style="left:932px;top:419px">PRT Hair Channels Only</div>
<div class="sbtn" style="left:1071px;top:415px;width:16px;height:16px"></div>
<svg class="bx" style="left:1075px;top:421px" width="8" height="5"><path d="M0 0 L8 0 L4 4 Z" fill="#000"/></svg>

<div class="roll" style="left:928px;top:449px;width:163px;height:16px"></div>
<div class="pt" style="left:932px;top:451px;font-weight:bold;color:#fff">+</div>
<div class="pt" style="left:928px;top:451px;width:163px;text-align:center">Display Options</div>
<div class="bx" style="left:924px;top:453px;width:3px;height:10px;border:1px solid #1c1c1c;border-right:none"></div>
<div class="bx" style="left:1091px;top:453px;width:3px;height:10px;border:1px solid #1c1c1c;border-left:none"></div>

<div id="mini">
 <div class="mn" style="left:5px;top:35px;width:32px;height:14px;border-color:#d2bebe;background:#f5e6e6"></div>
 <div class="mn" style="left:52px;top:12px;width:32px;height:41px;border-color:#d0b4b4;background:#f5dcdc"></div>
 <div class="mn" style="left:96px;top:22px;width:32px;height:25px;border-color:#d0b4b4;background:#f5dcdc"></div>
 <div class="mn" style="left:143px;top:4px;width:32px;height:45px;border-color:#c8b4d0;background:#ecdcf4"></div>
 <div class="mn" style="left:10px;top:62px;width:32px;height:10px;border-color:#b8b8c8;background:#e6e6f5"></div>
</div>

<div class="bx" style="left:0;top:884px;width:19px;height:17px;background:#0c0c0c"></div><div class="bx" style="left:0;top:885px;width:7px;height:14px;background:#00f000"></div><div class="bx" style="left:10px;top:885px;width:7px;height:14px;background:#00f000"></div>
<div id="status"></div>
<div class="pt" style="left:25px;top:887px">CURRENT Modifier, No Errors.</div>
<div class="ubtn" style="left:841px;width:39px;color:#d8e0ee">Undo</div>
<div class="ubtn" style="left:880px;width:39px;color:#151515;-webkit-text-stroke:0.25px #151515">Redo</div>
<div class="bx" style="left:0;top:905px;width:1102px;height:2px;background:#111"></div>
<div class="bx" style="left:1101px;top:0;width:1px;height:905px;background:#808080"></div>
<div class="bx" style="left:917px;top:40px;width:2px;height:844px;background:#464646"></div><div class="bx" style="left:919px;top:40px;width:1px;height:862px;background:#151515"></div>

</body></html>
